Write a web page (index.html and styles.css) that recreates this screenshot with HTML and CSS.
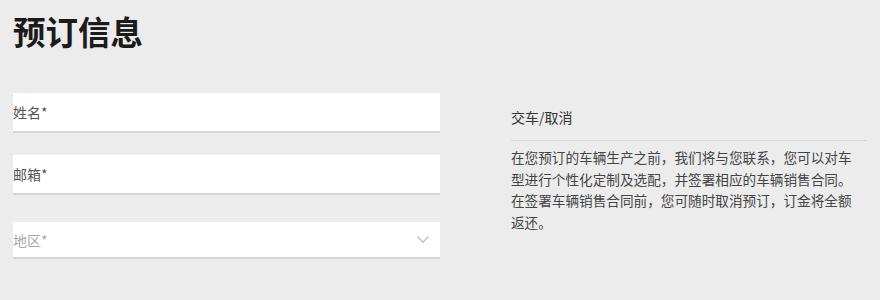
FILE: index.html
```html
<!DOCTYPE html>
<html lang="zh-CN">

<head>
    <meta charset="UTF-8">
    <meta name="viewport" content="width=device-width, initial-scale=1.0">
    <title>预订信息</title>
    <link rel="stylesheet" href="styles.css">
</head>

<body>
    <div class="page">
        <h1 class="title">预订信息</h1>
        <div class="columns">
            <form class="form">
                <div class="field">
                    <input class="field-input" type="text" placeholder="姓名*">
                </div>
                <div class="field">
                    <input class="field-input" type="email" placeholder="邮箱*">
                </div>
                <div class="field field-select">
                    <span class="select-label">地区*</span>
                    <svg class="chevron" width="12" height="7" viewBox="0 0 12 7">
                        <path d="M0.5 0.5 L6 6.2 L11.5 0.5" fill="none" stroke="#b8b8b8" stroke-width="1.1" />
                    </svg>
                </div>
            </form>
            <div class="info">
                <h3 class="info-title">交车/取消</h3>
                <p class="info-text">在您预订的车辆生产之前，我们将与您联系，您可以对车型进行个性化定制及选配，并签署相应的车辆销售合同。在签署车辆销售合同前，您可随时取消预订，订金将全额返还。</p>
            </div>
        </div>
    </div>
</body>

</html>
```

FILE: styles.css
```css
body {
    margin: 0;
    background: #ececec;
    font-family: "Noto Sans CJK SC", "Noto Sans", sans-serif;
    color: #333;
}

.page {
    padding: 9px 13px 0 13px;
}

.title {
    margin: 0;
    font-size: 32.5px;
    font-weight: 700;
    line-height: 44px;
    color: #1b1b1b;
}

.columns {
    display: grid;
    grid-template-columns: 427px 1fr;
    column-gap: 71px;
    margin-top: 40px;
}

.form {
    display: flex;
    flex-direction: column;
}

.field {
    background: #fff;
    border-bottom: 2px solid #d6d6d6;
    height: 38px;
    display: flex;
    align-items: center;
}

.field + .field {
    margin-top: 22px;
}

.field-select {
    margin-top: 27px !important;
    height: 35px;
    justify-content: space-between;
    padding-right: 11px;
}

.field-input {
    border: none;
    outline: none;
    background: transparent;
    width: 100%;
    padding: 0;
    font-family: inherit;
    font-size: 14px;
    color: #333;
}

.field-input::placeholder {
    color: #555;
}

.select-label {
    font-size: 14px;
    color: #a8a8a8;
}

.chevron {
    display: block;
}

.info {
    padding-top: 14px;
}

.info-title {
    margin: 0;
    font-size: 14px;
    font-weight: 400;
    line-height: 20px;
    color: #333;
    padding-bottom: 13px;
    border-bottom: 1px solid #d9d9d9;
}

.info-text {
    margin: 6px 0 0 0;
    max-width: 346px;
    font-size: 13.64px;
    line-height: 21.5px;
    color: #444;
}
```
